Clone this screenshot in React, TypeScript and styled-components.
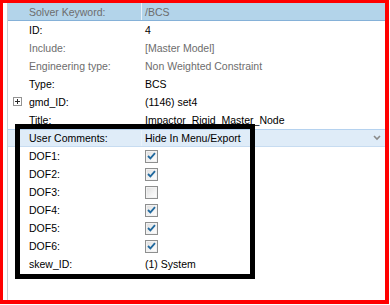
import React from 'react';
import styled, { createGlobalStyle, css } from 'styled-components';

const GlobalStyle = createGlobalStyle`
  html, body {
    margin: 0;
    padding: 0;
    background: #ffffff;
  }
  body {
    font-family: "Liberation Sans", Arial, sans-serif;
    font-size: 10.5px;
  }
`;

const Frame = styled('div')`
  position: relative;
  box-sizing: border-box;
  width: 389px;
  height: 304px;
  border-style: solid;
  border-color: #ff0000;
  border-width: 3px 4px 4px 3px;
  background: #ffffff;
`;

const Panel = styled('div')`
  box-sizing: border-box;
  height: 100%;
  margin-left: 4px;
  border-left: 1px solid #c9cdd2;
  display: flex;
  flex-direction: column;
`;

type RowKind = 'header' | 'comment' | 'plain';

const Row = styled('div')<{ $kind?: RowKind }>`
  box-sizing: border-box;
  height: 18px;
  display: grid;
  grid-template-columns: 134px 1fr auto;
  align-items: center;
  position: relative;

  ${({ $kind }) =>
    $kind === 'header' &&
    css`
      background: #b3d4ea;
      border-bottom: 1px solid #85b1d8;
    `}

  ${({ $kind }) =>
    $kind === 'comment' &&
    css`
      background: #dfecf8;
      border-top: 1px solid #b5d2ef;
      border-bottom: 1px solid #c7dcf1;
    `}
`;

const Label = styled('div')<{ $muted?: boolean; $sep?: boolean }>`
  box-sizing: border-box;
  height: 100%;
  display: flex;
  align-items: center;
  padding-left: 21px;
  color: ${({ $muted }) => ($muted ? '#6d6d6d' : '#000000')};
  white-space: nowrap;
  position: relative;
  border-right: 1px solid ${({ $sep }) => ($sep ? '#e9f2fa' : 'transparent')};
`;

const Value = styled('div')<{ $muted?: boolean }>`
  padding-left: 3px;
  color: ${({ $muted }) => ($muted ? '#6d6d6d' : '#000000')};
  white-space: nowrap;
  display: flex;
  align-items: center;
`;

const Expander = styled('span')`
  position: absolute;
  left: 5px;
  top: 4px;
  width: 9px;
  height: 9px;
  box-sizing: border-box;
  border: 1px solid #939393;
  background: #ffffff;
  display: flex;
  align-items: center;
  justify-content: center;
`;

const CheckBox = styled('span')`
  box-sizing: border-box;
  width: 13px;
  height: 13px;
  border: 1px solid #8e8f8f;
  background: linear-gradient(135deg, #dcdcdc 0%, #f4f4f4 60%, #ffffff 100%);
  display: flex;
  align-items: center;
  justify-content: center;
  box-shadow: inset 0 0 0 1px #f2f2f2;
`;

const Chevron = styled('span')`
  padding-right: 4px;
  display: flex;
  align-items: center;
`;

const Highlight = styled('div')`
  position: absolute;
  left: 12px;
  top: 121px;
  width: 240px;
  height: 155px;
  box-sizing: border-box;
  border: 5px solid #000000;
  pointer-events: none;
`;

const Check = ({ on }: { on: boolean }) => (
  <CheckBox>
    {on && (
      <svg width="9" height="8" viewBox="0 0 9 8">
        <path d="M1 4 L3.4 6.4 L8 1.2" fill="none" stroke="#21699e" strokeWidth="1.8" />
      </svg>
    )}
  </CheckBox>
);

const rows: { label: string; value: string; muted?: boolean }[] = [
  { label: 'ID:', value: '4' },
  { label: 'Include:', value: '[Master Model]', muted: true },
  { label: 'Engineering type:', value: 'Non Weighted Constraint', muted: true },
  { label: 'Type:', value: 'BCS' },
];

const dofs: [string, boolean][] = [
  ['DOF1:', true],
  ['DOF2:', true],
  ['DOF3:', false],
  ['DOF4:', true],
  ['DOF5:', true],
  ['DOF6:', true],
];

export default function App() {
  return (
    <>
      <GlobalStyle />
      <Frame>
        <Panel>
          <Row $kind="header">
            <Label $muted $sep>Solver Keyword:</Label>
            <Value $muted>/BCS</Value>
          </Row>
          {rows.map((r) => (
            <Row key={r.label}>
              <Label $muted={r.muted}>{r.label}</Label>
              <Value $muted={r.muted}>{r.value}</Value>
            </Row>
          ))}
          <Row>
            <Label>
              <Expander>
                <svg width="7" height="7" viewBox="0 0 7 7">
                  <path d="M1 3.5 H6 M3.5 1 V6" stroke="#2b2b2b" strokeWidth="1" />
                </svg>
              </Expander>
              gmd_ID:
            </Label>
            <Value>(1146) set4</Value>
          </Row>
          <Row>
            <Label>Title:</Label>
            <Value>Impactor_Rigid_Master_Node</Value>
          </Row>
          <Row $kind="comment">
            <Label $sep>User Comments:</Label>
            <Value>Hide In Menu/Export</Value>
            <Chevron>
              <svg width="8" height="6" viewBox="0 0 8 6">
                <path d="M1 1 L4 4 L7 1" fill="none" stroke="#8a8a8a" strokeWidth="1.6" />
              </svg>
            </Chevron>
          </Row>
          {dofs.map(([name, on]) => (
            <Row key={name}>
              <Label>{name}</Label>
              <Value>
                <Check on={on} />
              </Value>
            </Row>
          ))}
          <Row>
            <Label>skew_ID:</Label>
            <Value>(1) System</Value>
          </Row>
        </Panel>
        <Highlight />
      </Frame>
    </>
  );
}
